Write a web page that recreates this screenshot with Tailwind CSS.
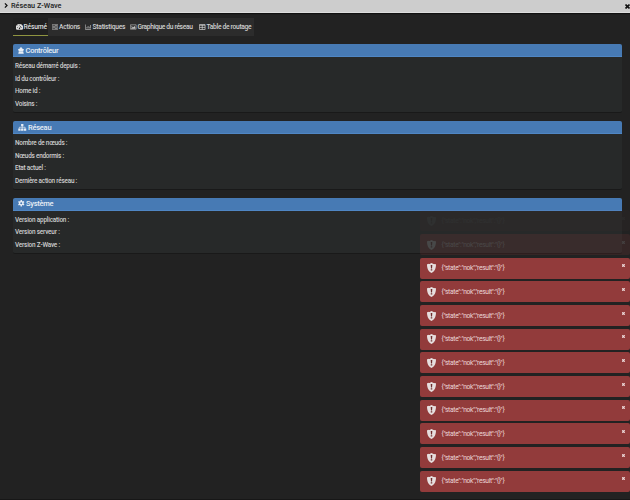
<!DOCTYPE html>
<html lang="fr">

<head>
    <meta charset="UTF-8">
    <meta name="viewport" content="width=device-width, initial-scale=1.0">
    <title>Réseau Z-Wave</title>
    <script src="https://cdn.jsdelivr.net/npm/@tailwindcss/browser@4"></script>
</head>

<body class="relative w-[630px] h-[500px] overflow-hidden bg-[#222222] font-['Roboto',sans-serif] text-[6.4px] text-[#cfcfcf]">

    <!-- Title bar -->
    <header class="h-[13px] flex items-center justify-between bg-[#cdcdcd] border-b border-[#dddddd] pl-[4px] text-[#222222] shadow-[0_1px_1px_#111]">
        <div class="flex items-center gap-[3px]">
            <svg class="w-[4px] h-[5px]" viewBox="0 0 4 6" fill="none" stroke="#111" stroke-width="1.5"><path d="M.7.5 3.2 3 .7 5.5" /></svg>
            <h1 class="text-[7.3px] leading-none font-medium">Réseau Z-Wave</h1>
        </div>
        <svg class="w-[5px] h-[5px]" viewBox="0 0 5 5" stroke="#111" stroke-width="1.6"><path d="M.5.5l4 4M4.500.5l-4 4" /></svg>
    </header>

    <main class="pl-[13px] pr-[8px] pt-[5px]">
        <!-- Tabs -->
        <nav class="w-[241px] h-[18px] flex bg-[#2c2c2c] leading-none whitespace-nowrap text-[6.7px] tracking-[-0.25px] font-medium">
            <a class="w-[35px] flex items-center gap-[1px] pl-[2.500px] bg-[#202020] border-b border-[#8f9440] text-[#dddddd]">
                <svg class="w-[7px] h-[6px] shrink-0" viewBox="0 0 14 12"><path fill="#ddd" d="M7 0a7 7 0 0 0-6 11.2c.2.4.5.5.9.5h10.2c.4 0 .7-.1.9-.5A7 7 0 0 0 7 0z" /><path stroke="#202020" stroke-width="1.200" d="M7 9l2.5-5M2 7h1.6M3.5 3.3l1 1M7 1.5v1.6M10.6 7H12" /><circle cx="7" cy="9" r="1.400" fill="#202020" /></svg>
                <span class="pt-[1px] tracking-[-0.15px]">Résumé</span>
            </a>
            <a class="w-[33px] flex items-center gap-[1px] pl-[4px]">
                <svg class="w-[6px] h-[6px] shrink-0" viewBox="0 0 12 12"><path fill="#777" d="M0 0h12v12H0z" /><path stroke="#2c2c2c" d="M1.5 3h9M1.5 6h9M1.5 9h9" /><path fill="#bbb" d="M7 1.8h2v2.4H7zM3 4.8h2v2.4H3zM7 7.8h2v2.4H7z" /></svg>
                <span class="pt-[1px]">Actions</span>
            </a>
            <a class="w-[46px] flex items-center gap-[1.500px] pl-[4px]">
                <svg class="w-[6px] h-[6px] shrink-0" viewBox="0 0 12 12" fill="none" stroke="#b5b5b5" stroke-width="1.4"><path d="M.8 1v10H12M3.8 9V6M6.2 9V4M8.6 9V5.500M11 9V2" /></svg>
                <span class="pt-[1px]">Statistiques</span>
            </a>
            <a class="w-[68px] flex items-center gap-[1px] pl-[3px]">
                <svg class="w-[6.500px] h-[6px] shrink-0" viewBox="0 0 14 12"><path fill="none" stroke="#c5c5c5" stroke-width="1.3" d="M.8 1.300h12.400v9.400H.8z" /><circle cx="4" cy="4.300" r="1.200" fill="#c5c5c5" /><path fill="#c5c5c5" d="M2.500 9.500V8L5 6l1.500 1.200L9.500 4l2 2.500v3z" /></svg>
                <span class="pt-[1px] tracking-[-0.35px]">Graphique du réseau</span>
            </a>
            <a class="flex items-center gap-[1px] pl-[4px]">
                <svg class="w-[6.500px] h-[6px] shrink-0" viewBox="0 0 13 12" fill="none" stroke="#d5d5d5" stroke-width="1.4"><path d="M.8 1.200h11.400v9.800H.8zM1 2.500h11M1 6.800h11M6.500 2v9" /></svg>
                <span class="pt-[1px] tracking-[-0.320px]">Table de routage</span>
            </a>
        </nav>

        <!-- Contrôleur -->
        <section class="mt-[8px] h-[69px] rounded-[2px] bg-[#272929] border-b border-[#191919]">
            <h2 class="h-[13px] flex items-center gap-[1.500px] pl-[5px] pt-[1px] rounded-t-[2px] bg-[#477ab4] border-b border-[#4f86c4] text-[7.500px] tracking-[-0.25px] leading-none font-medium text-[#e8eef5]">
                <svg class="w-[6px] h-[7px]" viewBox="0 0 12 14" fill="#e8eef5"><path d="M5 0h2v2h2v1.600H7.500L8 4h3.800L10.400 9H1.600L.2 4H4l.5-.4H3V2h2zM1.500 9.600h9l1 3.900H.5z" /></svg>
                Contrôleur
            </h2>
            <div class="pl-[2px] pt-[3px] font-medium tracking-[-0.23px] leading-[12.7px]">
                <p>Réseau démarré depuis :</p>
                <p>Id du contrôleur :</p>
                <p>Home id :</p>
                <p>Voisins :</p>
            </div>
        </section>

        <!-- Réseau -->
        <section class="mt-[8px] h-[69px] rounded-[2px] bg-[#272929] border-b border-[#191919]">
            <h2 class="h-[13px] flex items-center gap-[1.500px] pl-[5px] pt-[1px] rounded-t-[2px] bg-[#477ab4] border-b border-[#4f86c4] text-[7.500px] tracking-[-0.25px] leading-none font-medium text-[#e8eef5]">
                <svg class="w-[8.500px] h-[7px]" viewBox="0 0 16 14" fill="#e8eef5"><path d="M5.700 0h4.600v4.500H5.700zM0 9h4.700v4.700H0zM5.650 9h4.700v4.700h-4.700zM11.300 9H16v4.700h-4.700z" /><path fill="none" stroke="#e8eef5" stroke-width="1.400" d="M8 4v5M2.200 9V6.500h11.600V9" /></svg>
                Réseau
            </h2>
            <div class="pl-[2px] pt-[3px] font-medium tracking-[-0.23px] leading-[12.7px]">
                <p>Nombre de nœuds :</p>
                <p>Nœuds endormis :</p>
                <p>Etat actuel :</p>
                <p>Dernière action réseau :</p>
            </div>
        </section>

        <!-- Système -->
        <section class="mt-[7.5px] h-[56px] rounded-[2px] bg-[#272929] border-b border-[#191919]">
            <h2 class="h-[13px] flex items-center gap-[1.500px] pl-[5px] rounded-t-[2px] bg-[#477ab4] border-b border-[#4f86c4] text-[7.500px] tracking-[-0.25px] leading-none font-medium text-[#e8eef5]">
                <svg class="w-[6.500px] h-[6.500px]" viewBox="0 0 14 14"><path stroke="#e8eef5" stroke-width="3" d="M7 0v14M.9 3.500l12.200 7M.9 10.500l12.200-7" /><circle cx="7" cy="7" r="5" fill="#e8eef5" /><circle cx="7" cy="7" r="2.200" fill="#477ab4" /></svg>
                Système
            </h2>
            <div class="pl-[2px] pt-[3px] font-medium tracking-[-0.2px] leading-[12.7px]">
                <p>Version application :</p>
                <p>Version serveur :</p>
                <p>Version Z-Wave :</p>
            </div>
        </section>
    </main>

    <!-- Notifications -->
    <div id="toasts" class="absolute right-[0.5px] bottom-[8.300px] w-[209.500px] flex flex-col gap-[2.670px]"></div>
    <div class="absolute inset-x-0 bottom-0 h-px bg-[#171717]"></div>

    <template id="toast">
        <div class="h-[21px] flex items-center pl-[7px] pr-[5px] rounded-[2px] bg-[#923b3b] text-[#ead6d6]">
            <svg class="w-[9px] h-[10px] shrink-0" viewBox="0 0 18 20"><path fill="#e6dede" d="M9 0c2.500 1.600 5.500 2.300 9 2.400C18 10 16 16.500 9 20 2 16.500 0 10 0 2.400 3.500 2.300 6.500 1.600 9 0z" /><path fill="#6e2b2b" d="M7.400 4h3.200l-.5 7H7.900zM7.500 12.500h3V15h-3z" /></svg>
            <span class="message ml-[5.500px] pt-[1px] text-[6.700px] tracking-[-0.33px] leading-none whitespace-nowrap"></span>
            <svg class="w-[3px] h-[3px] ml-auto mb-[5px]" viewBox="0 0 6 6" stroke="#ecd9d9" stroke-width="2.500"><path d="M.6.6l4.800 4.800M5.400.6.6 5.400" /></svg>
        </div>
    </template>

    <script>
        const toasts = document.getElementById("toasts");
        const template = document.getElementById("toast");

        // The two oldest notifications are fading out
        const opacities = [0.04, 0.17, 1, 1, 1, 1, 1, 1, 1, 1, 1, 1];

        opacities.forEach(function (opacity) {
            const toast = template.content.firstElementChild.cloneNode(true);
            toast.style.opacity = opacity;
            toast.querySelector(".message").textContent = '{"state":"nok","result":"{}"}';
            toasts.appendChild(toast);
        });
    </script>

</body>

</html>
